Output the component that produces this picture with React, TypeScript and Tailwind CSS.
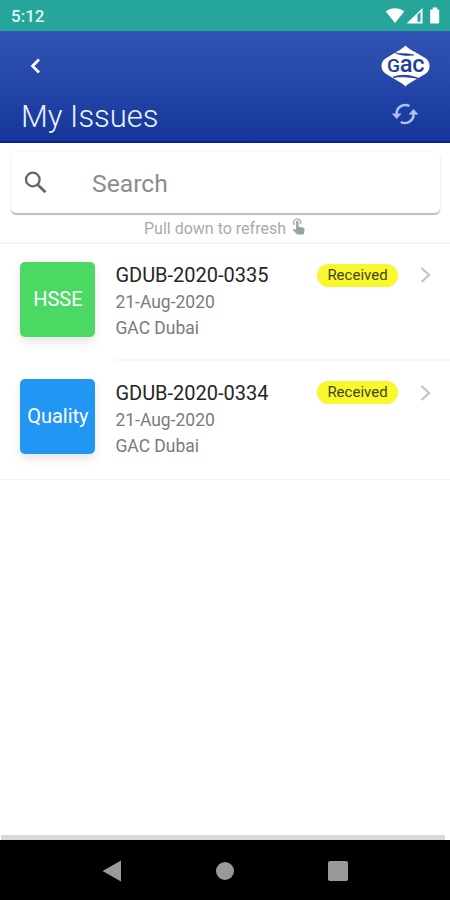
import clsx from "clsx";

interface Issue {
  id: string;
  date: string;
  location: string;
  category: string;
  status: string;
  color: string;
}

const ISSUES: Issue[] = [
  {
    id: "GDUB-2020-0335",
    date: "21-Aug-2020",
    location: "GAC Dubai",
    category: "HSSE",
    status: "Received",
    color: "bg-[#4bd964]",
  },
  {
    id: "GDUB-2020-0334",
    date: "21-Aug-2020",
    location: "GAC Dubai",
    category: "Quality",
    status: "Received",
    color: "bg-[#2196f3]",
  },
];

function StatusBar() {
  return (
    <div className="flex h-[31px] shrink-0 items-center justify-between bg-[#26a69a] pr-[8px] pl-[11px]">
      <span className="mt-[2px] text-[17px] leading-none font-medium text-[#dff5f1]">5:12</span>
      <svg width="57" height="18" viewBox="0 0 57 18" fill="#fff" className="-mt-[1px]">
        <path d="M.8 5.600C3.500 3 6.500 2.200 10 2.200s6.500.8 9.200 3.400L10 17Z" />
        <path fillRule="evenodd" d="M21.500 17.500 37.500 2v15.500ZM32.500 8.500v7.300h3V5.700Z" />
        <path d="M47.700 1.500h4.500v2h1.200q.8 0 .8.800v12.400q0 .800-.800.800h-7.400q-.800 0-.800-.800V4.300q0-.800.800-.800h1.700Z" />
      </svg>
    </div>
  );
}

function Logo() {
  return (
    <svg width="50" height="42" viewBox="0 0 50 42">
      <path
        d="M25.500 .5Q28 3.500 34.500 6.800L46 13.500Q49.500 16 49.500 21t-3.500 7.500L34.500 35.200Q28 38.500 25.500 41.500 23 38.500 16.500 35.200L5.500 28.500Q1.500 26 1.500 21t4-7.500L16.500 6.800Q23 3.500 25.500 .5Z"
        fill="#fff"
      />
      <path d="M14.500 7.500C20 9.600 26 7.600 34 10 27 11 20 10.500 14.500 7.500Z" fill="#1f3d9e" stroke="#1f3d9e" strokeWidth=".6" />
      <path d="M13 32.300C20 29.500 29 29.500 38 33.300 29 31.700 20 31.300 13 32.300Z" fill="#1f3d9e" stroke="#1f3d9e" strokeWidth=".9" />
      <g fill="#1f3d9e" className="font-[Roboto,sans-serif] font-medium">
        <text x="7" y="26.800" textLength="13" lengthAdjust="spacingAndGlyphs" className="text-[17.500px]">
          G
        </text>
        <text x="19.800" y="26.800" textLength="12.800" lengthAdjust="spacingAndGlyphs" className="text-[23px]">
          a
        </text>
        <text x="32.200" y="26.800" textLength="12.300" lengthAdjust="spacingAndGlyphs" className="text-[23px]">
          c
        </text>
      </g>
    </svg>
  );
}

function RefreshIcon() {
  return (
    <svg width="28" height="24" viewBox="0 0 28 24" fill="none" stroke="#b1c1ec" strokeWidth="2.500" className="-mt-[5px]">
      <path d="M5.600 13V11.500A8.800 8.800 0 0 1 18.500 4" />
      <path d="M22.600 10.500V12A8.800 8.800 0 0 1 9.700 20" />
      <path d="M.8 11.500h9.800L5.700 17ZM17.600 12.500h9.800L22.500 7Z" fill="#b1c1ec" stroke="none" />
    </svg>
  );
}

function Header() {
  return (
    <header className="flex h-[112px] shrink-0 flex-col border-b-2 border-[#0a1f96] bg-linear-to-b from-[#3154b4] to-[#15379b] pr-5 pl-[21px]">
      <div className="flex h-[69px] items-center justify-between">
        <svg width="28" height="24" viewBox="0 0 28 24" fill="none" stroke="#fff" strokeWidth="2.700">
          <path d="m18 5.500-6.500 6.500 6.500 6.500" />
        </svg>
        <Logo />
      </div>
      <div className="flex h-[33px] items-center justify-between pr-[11px]">
        <h1 className="text-[31px] leading-none font-light text-[#eef1ff]">My Issues</h1>
        <RefreshIcon />
      </div>
    </header>
  );
}

function SearchBar() {
  return (
    <div className="mx-[10.500px] mt-[9px] flex h-[61px] shrink-0 items-center rounded-[5px] bg-white pl-[13.500px] shadow-[0_2px_1px_#bdbdbd,0_0_3px_#eeeeee]">
      <svg width="24" height="24" viewBox="0 0 24 24" fill="none" stroke="#666" strokeWidth="2.300">
        <circle cx="8.800" cy="8.500" r="6.800" />
        <path d="m13.500 13.500 8 7.800" strokeWidth="2.800" />
      </svg>
      <span className="mt-[3px] ml-[44px] text-[24.700px] leading-none text-[#8c8c8c]">Search</span>
    </div>
  );
}

function TapIcon() {
  return (
    <svg width="14" height="17" viewBox="0 0 14 17" className="-mt-[4px]">
      <path d="M2.500 6.800A3.500 3.500 0 1 1 8.200 6.200" fill="none" stroke="#a3b1a8" strokeWidth="1.400" />
      <path
        d="M4.100 4q0-1.300 1.200-1.300T6.500 4v4.500l5 1.300q1.300.4 1.100 1.700l-.6 4.200q-.1.800-1 .8H5.300L1 12.300q-.4-.6.200-1l.5-.4 2.400.8Z"
        fill="#94a59b"
      />
    </svg>
  );
}

function IssueRow({ issue, last }: { issue: Issue; last: boolean }) {
  return (
    <li className="flex h-[117.300px] pl-[20.400px]">
      <div
        className={clsx(
          "mt-[18px] flex size-[75px] shrink-0 items-center justify-center rounded-[5px] pb-[1px] text-[20px] text-white shadow-[0_5px_10px_rgba(0,0,0,0.1)]",
          issue.color,
        )}
      >
        {issue.category}
      </div>
      <div
        className={clsx(
          "ml-5 flex flex-1 items-start justify-between pt-[18.300px] pr-[19px]",
          !last && "border-b-2 border-[#f7f7f7]",
        )}
      >
        <div className="whitespace-nowrap text-[#7b7b7b]">
          <div className="text-[20px] leading-[27px] text-[#252525]">{issue.id}</div>
          <div className="text-[17.500px] leading-[26px]">{issue.date}</div>
          <div className="text-[17.500px] leading-[26px]">{issue.location}</div>
        </div>
        <div className="mt-[1.500px] flex items-center gap-[21px]">
          <span className="flex h-[23px] w-[81px] items-center justify-center rounded-full bg-[#f8f82c] text-[15px] text-[#45450f]">
            {issue.status}
          </span>
          <svg width="12" height="18" viewBox="0 0 12 18" fill="none" stroke="#c4c4c4" strokeWidth="2.200">
            <path d="m2.500 2 7.500 7-7.500 7" />
          </svg>
        </div>
      </div>
    </li>
  );
}

function NavBar() {
  return (
    <nav className="flex h-[60px] shrink-0 items-center justify-center gap-[94px] bg-black pt-[1px]">
      <svg width="20" height="22" viewBox="0 0 20 22" fill="#999">
        <path d="M.5 11 19 .5v21Z" />
      </svg>
      <div className="size-[18px] rounded-full bg-[#999]" />
      <div className="size-[20px] rounded-[2px] bg-[#999]" />
    </nav>
  );
}

export default function App() {
  return (
    <div className="flex h-[900px] w-[450px] flex-col overflow-hidden bg-white font-[Roboto,sans-serif]">
      <StatusBar />
      <Header />
      <SearchBar />
      <div className="flex h-[29px] shrink-0 items-center justify-center gap-[6px] pt-[2px] text-[16px] text-[#a5aea8]">
        <span>Pull down to refresh</span>
        <TapIcon />
      </div>
      <ul className="border-t-2 border-b border-[#f5f5f5]">
        {ISSUES.map((issue, i) => (
          <IssueRow key={issue.id} issue={issue} last={i === ISSUES.length - 1} />
        ))}
      </ul>
      <div className="mt-auto mr-[5px] ml-[1px] h-[5px] shrink-0 bg-[#d8d8d8]" />
      <NavBar />
    </div>
  );
}
